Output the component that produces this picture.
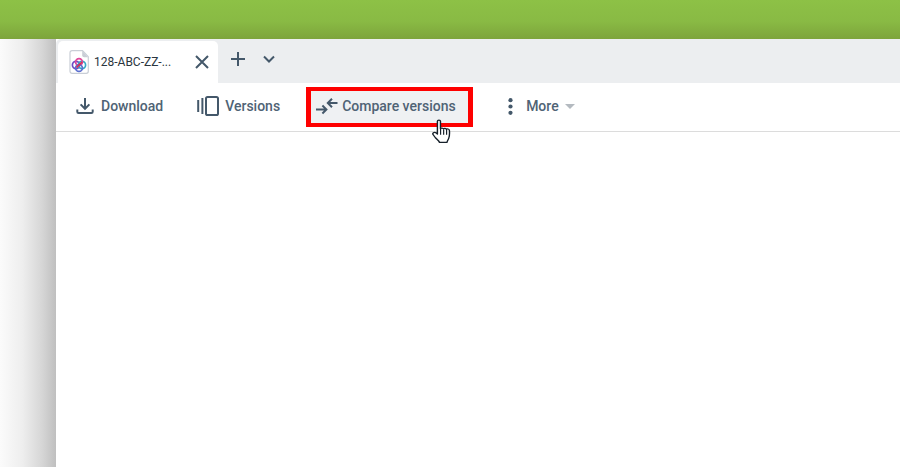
<script>
  // toolbar items other than the highlighted one are plain buttons
</script>

<div class="page">
  <div class="topbar"></div>
  <div class="desk">
    <div class="side"></div>
    <div class="window">
      <div class="tabstrip">
        <div class="tab">
          <svg class="fileicon" width="20" height="24" viewBox="0 0 20 24" fill="none">
            <path d="M3 .7h10.500l5.800 6v14.600a2 2 0 0 1-2 2H3a2 2 0 0 1-2-2V2.700a2 2 0 0 1 2-2z" fill="#fff" stroke="#c9ced6" stroke-width="1.200" />
            <path d="M13.200.8v4.400a2 2 0 0 0 2 2h4z" fill="#c9ced6" />
            <circle cx="7" cy="15" r="3.600" stroke="#6a4bc4" stroke-width="1.700" />
            <circle cx="13" cy="15" r="3.600" stroke="#35a9c4" stroke-width="1.700" />
            <circle cx="10" cy="12" r="3.400" stroke="#e0479a" stroke-width="1.700" />
            <circle cx="10" cy="18" r="3.400" stroke="#5b6fd0" stroke-width="1.700" />
            <path d="M7.500 17.500l5.500-5.500" stroke="#d9304f" stroke-width="1.700" />
          </svg>
          <span class="tabname">128-ABC-ZZ-...</span>
          <svg class="close" width="16" height="16" viewBox="0 0 16 16">
            <path d="M2 2l12 12M14 2L2 14" stroke="#44586a" stroke-width="2" fill="none" />
          </svg>
        </div>
        <svg class="plus" width="16" height="16" viewBox="0 0 16 16">
          <path d="M8 1v14M1 8h14" stroke="#44586a" stroke-width="2" fill="none" />
        </svg>
        <svg class="chev" width="14" height="10" viewBox="0 0 14 10">
          <path d="M2 2.500l5 5 5-5" stroke="#44586a" stroke-width="2" fill="none" />
        </svg>
      </div>

      <div class="toolbar">
        <button class="item download">
          <svg width="18" height="18" viewBox="0 0 18 18" fill="none">
            <path d="M9 1v10.500M4.600 7.400L9 11.800l4.400-4.400M1.300 12.500v2.200a1.300 1.300 0 0 0 1.300 1.300h12.800a1.300 1.300 0 0 0 1.300-1.300v-2.200" stroke="#44586a" stroke-width="2" />
          </svg>
          Download
        </button>
        <button class="item versions">
          <svg width="22" height="20" viewBox="0 0 22 20" fill="none">
            <rect x="9" y="1" width="12" height="18" rx="1.600" stroke="#44586a" stroke-width="2" />
            <path d="M5.400 2v16M1.200 4v12" stroke="#44586a" stroke-width="2" />
          </svg>
          Versions
        </button>
        <button class="item compare">
          <svg width="22" height="18" viewBox="0 0 22 18" fill="none">
            <path d="M0 12.500h10M6.400 8.500l4 4-4 4M21.500 6H12M16 1.800L11.800 6l4.200 4.200" stroke="#44586a" stroke-width="2" />
          </svg>
          Compare versions
        </button>
        <button class="item more">
          <svg width="5" height="17" viewBox="0 0 5 17">
            <circle cx="2.500" cy="2.200" r="2.100" fill="#44586a" />
            <circle cx="2.500" cy="8.500" r="2.100" fill="#44586a" />
            <circle cx="2.500" cy="14.800" r="2.100" fill="#44586a" />
          </svg>
          More
          <span class="caret"></span>
        </button>
      </div>
    </div>
  </div>

  <svg class="cursor" width="20" height="25" viewBox="0 0 17 24" preserveAspectRatio="none">
    <path d="M4.600 2.200c0-1.600 2.600-1.600 2.600 0v7.200c.3-1 2.400-1 2.600.2.300-.9 2.300-.9 2.500.4.400-.8 2.400-.6 2.500 1 .2 2.600.1 5.600-.6 7.600-.5 1.500-1.200 2.400-1.500 3.900H6.400c-.6-1.700-2-2.800-3.500-4.500L1 15.100c-1-1.400.8-3 2.300-1.900l1.300 1.200z" fill="#fff" stroke="#16202a" stroke-width="1.200" stroke-linejoin="round" />
    <path d="M7.300 9.500v5.500M9.900 10v5M12.400 10.500v4.600" stroke="#16202a" stroke-width="1" fill="none" />
  </svg>
</div>

<style>
  :global(body) {
    margin: 0;
    background: #fff;
  }

  .page {
    position: relative;
    width: 900px;
    height: 467px;
    display: flex;
    flex-direction: column;
    overflow: hidden;
    font-family: Roboto, "Liberation Sans", sans-serif;
  }

  .topbar {
    height: 39px;
    background: linear-gradient(180deg, #8dc146 0%, #89ba44 55%, #7da43c 100%);
  }

  .desk {
    flex: 1;
    display: flex;
    min-height: 0;
  }

  .side {
    width: 56px;
    background: linear-gradient(90deg, #fbfbfb 0%, #eeeeee 40%, #d6d6d6 75%, #bfbfbf 100%);
  }

  .window {
    flex: 1;
    background: #fff;
    border-top-left-radius: 5px;
    overflow: hidden;
  }

  .tabstrip {
    height: 44px;
    background: #eceef0;
    display: flex;
    align-items: flex-end;
    padding-left: 2px;
  }

  .tab {
    width: 160px;
    height: 42px;
    box-sizing: border-box;
    background: #fff;
    border-radius: 5px 5px 0 0;
    display: flex;
    align-items: center;
    padding: 0 8px 0 11px;
    margin-right: 12px;
  }

  .fileicon {
    flex: none;
    margin-right: 5px;
  }

  .tabname {
    flex: 1;
    font-size: 12px;
    color: #2b3640;
    white-space: nowrap;
  }

  .plus {
    align-self: center;
    margin-right: 16px;
    margin-bottom: 4px;
  }

  .chev {
    align-self: center;
    margin-bottom: 4px;
  }

  .toolbar {
    height: 49px;
    box-sizing: border-box;
    border-bottom: 1px solid #dcdcdc;
    display: flex;
    align-items: center;
    padding-left: 20px;
  }

  .item {
    display: flex;
    align-items: center;
    border: 0;
    padding: 0 0 2px;
    background: none;
    font: 500 14px Roboto, "Liberation Sans", sans-serif;
    color: #4f6375;
    white-space: nowrap;
    cursor: pointer;
  }

  .download {
    gap: 7px;
    margin-right: 34px;
  }

  .versions {
    gap: 6px;
    margin-right: 26px;
  }

  .compare {
    box-sizing: border-box;
    width: 167px;
    height: 40px;
    gap: 4px;
    padding: 0 0 2px 5px;
    background: #eff1f3;
    border-style: solid;
    border-color: #fe0000;
    border-width: 4px 5px;
    margin-right: 35px;
  }

  .more {
    gap: 13px;
  }

  .caret {
    width: 0;
    height: 0;
    margin-left: -7px;
    border: 5px solid transparent;
    border-top-color: #b4bac0;
    border-bottom: 0;
  }

  .cursor {
    position: absolute;
    left: 432px;
    top: 119px;
  }
</style>
